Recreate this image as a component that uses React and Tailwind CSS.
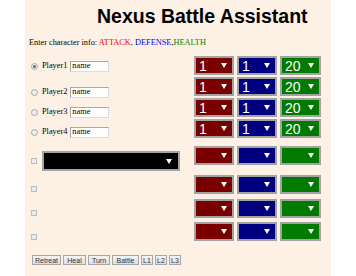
const serif = { fontFamily: '"Liberation Serif", "Times New Roman", serif' };

const Arrow = () => (
  <svg width="6" height="5" viewBox="0 0 6 5" className="shrink-0">
    <path d="M0 0 L6 0 L3 5 Z" fill="#ffffff" />
  </svg>
);

const Pick = ({ value, color, width = 'w-[40px]' }) => (
  <div
    className={`${width} h-[19px] border-2 border-[#a3a3a3] ${color} flex items-center justify-between pl-[3px] pr-[5px] text-white text-[14px] leading-none font-['Liberation_Sans',Arial,sans-serif]`}
  >
    <span>{value}</span>
    <Arrow />
  </div>
);

const StatRow = ({ a, d, h, className = '' }) => (
  <div className={`flex gap-[3px] ${className}`}>
    <Pick value={a} color="bg-[#7a0000]" />
    <Pick value={d} color="bg-[#000080]" />
    <Pick value={h} color="bg-[#007a00]" width="w-[41px]" />
  </div>
);

const Radio = ({ checked }) => (
  <span className="w-[7px] h-[7px] rounded-full border border-[#a8a8a8] bg-[#ececec] flex items-center justify-center shrink-0">
    {checked && <span className="w-[3px] h-[3px] rounded-full bg-[#666]" />}
  </span>
);

const Check = () => (
  <span className="w-[6px] h-[6px] border border-[#bdbdbd] bg-[#ececec] shrink-0" />
);

const PlayerRow = ({ n, checked, className = '' }) => (
  <div className={`h-[12px] flex items-center pl-[6px] ${className}`}>
    <Radio checked={checked} />
    <span className="ml-[4px] text-[8.3px] text-black leading-none" style={serif}>
      Player{n}
    </span>
    <span
      className="ml-[3px] w-[39px] h-[11px] bg-white border border-[#a9a9a9] border-r-[#dcdcdc] border-b-[#dcdcdc] flex items-center pl-[1px] text-[8.3px] text-black leading-none"
      style={serif}
    >
      name
    </span>
  </div>
);

const buttons = [
  ['Retreat', 'w-[29px]'],
  ['Heal', 'w-[23px]'],
  ['Turn', 'w-[22px]'],
  ['Battle', 'w-[27px]'],
  ['L1', 'w-[12px]'],
  ['L2', 'w-[12px]'],
  ['L3', 'w-[12px]'],
];

export default function App() {
  return (
    <div className="min-h-screen bg-white">
      <div className="ml-[25px] w-[306px] min-h-[276px] bg-[#fdf1e6]">
        <h1 className="pt-[5px] pl-[72px] h-[27px] text-[19.5px] leading-[22px] font-bold text-black font-['Liberation_Sans',Arial,sans-serif]">
          Nexus Battle Assistant
        </h1>

        <p className="mt-[11px] pl-[4px] text-[8.3px] leading-[10px] text-black" style={serif}>
          Enter character info: <span className="text-[#ff0000]">ATTACK</span>,{' '}
          <span className="text-[#0000ff]">DEFENSE</span>,<span className="text-[#008000]">HEALTH</span>
        </p>

        <div className="flex">
          {/* players + party slots */}
          <div className="w-[169px] flex flex-col">
            <PlayerRow n={1} checked className="mt-[12px]" />
            <PlayerRow n={2} className="mt-[14px]" />
            <PlayerRow n={3} className="mt-[8px]" />
            <PlayerRow n={4} className="mt-[8px]" />

            <div className="mt-[13px] h-[20px] flex items-center pl-[6px]">
              <Check />
              <div className="ml-[5px] w-[138px] h-[20px] bg-black border-2 border-[#a3a3a3] flex items-center justify-end pr-[6px]">
                <Arrow />
              </div>
            </div>
            <div className="mt-[12px] h-[12px] flex items-center pl-[6px]">
              <Check />
            </div>
            <div className="mt-[12px] h-[12px] flex items-center pl-[6px]">
              <Check />
            </div>
            <div className="mt-[12px] h-[12px] flex items-center pl-[6px]">
              <Check />
            </div>
          </div>

          {/* stats */}
          <div className="flex flex-col mt-[8px]">
            <div className="flex flex-col gap-[2px]">
              <StatRow a="1" d="1" h="20" />
              <StatRow a="1" d="1" h="20" />
              <StatRow a="1" d="1" h="20" />
              <StatRow a="1" d="1" h="20" />
            </div>
            <StatRow className="mt-[8px]" />
            <StatRow className="mt-[10px]" />
            <StatRow className="mt-[5px]" />
            <StatRow className="mt-[4px]" />
          </div>
        </div>

        <div className="mt-[12px] pl-[7px] flex gap-[2px]">
          {buttons.map(([label, w]) => (
            <button
              key={label}
              className={`${w} h-[10px] border border-[#a6a6a6] bg-gradient-to-b from-[#f4f4f4] to-[#dedede] text-[7px] leading-none text-[#333] flex items-center justify-center font-['Liberation_Sans',Arial,sans-serif]`}
            >
              {label}
            </button>
          ))}
        </div>
      </div>
    </div>
  );
}
